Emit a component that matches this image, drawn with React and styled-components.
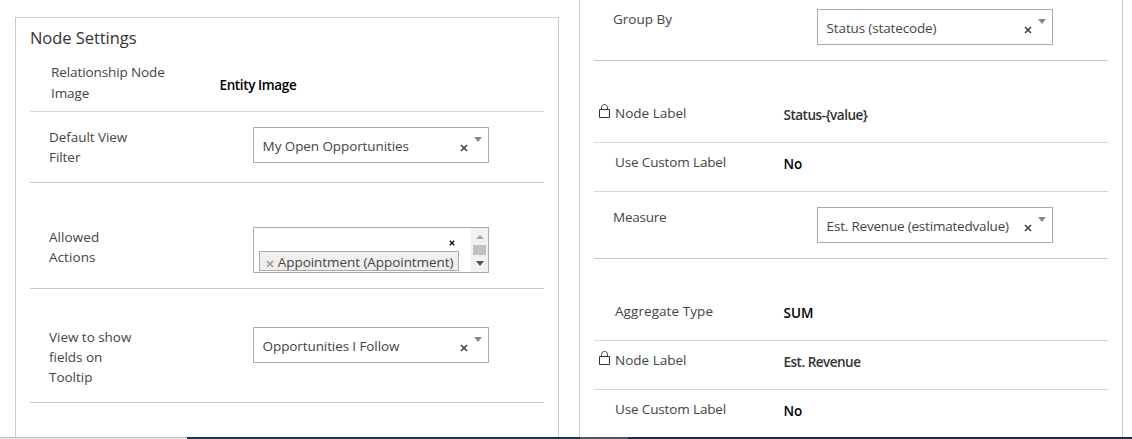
import React from "react";
import styled, { createGlobalStyle } from "styled-components";

const GlobalStyle = createGlobalStyle`
  * { box-sizing: border-box; }
  body {
    margin: 0;
    background: #fff;
    color: #444;
    font: 13.5px/20px "Open Sans", "Noto Sans", sans-serif;
    overflow: hidden;
  }
`;

const Page = styled.div`
  display: flex;
  flex-direction: column;
  height: 439px;
`;

const Columns = styled.main`
  display: flex;
  flex: 1;
  min-height: 0;
  padding-left: 15px;
  gap: 20px;
  overflow: hidden;
`;

const Panel = styled.section`
  width: 544px;
  flex: none;
  padding: 0 14px;
  border: solid #ccc;
  border-width: ${(p) => (p.$continued ? "0 1px" : "1px 1px 0")};
  margin-top: ${(p) => (p.$continued ? 0 : 17)}px;
`;

const Title = styled.h2`
  margin: 0;
  padding-top: 8px;
  font-size: 16.5px;
  font-weight: 400;
  line-height: 24px;
  letter-spacing: -0.05px;
  color: #333;
`;

const Row = styled.div`
  display: flex;
  align-items: flex-start;
  height: ${(p) => p.$height}px;
  padding-top: ${(p) => p.$top}px;
  border-bottom: ${(p) => (p.$last ? 0 : 1)}px solid ${(p) => (p.$light ? "#d6d6d6" : "#c8c8c8")};
`;

const Label = styled.div`
  display: flex;
  flex: none;
  width: ${(p) => p.$width}px;
  padding-left: ${(p) => p.$indent}px;
  line-height: ${(p) => p.$line || 20}px;
  letter-spacing: ${(p) => p.$track || 0}px;
  white-space: pre-line;
`;

const Value = styled.div`
  padding: ${(p) => p.$drop}px 0 0 0.5px;
  font-weight: 600;
  letter-spacing: ${(p) => p.$track || 0}px;
  color: ${(p) => (p.$muted ? "#333" : "#000")};
`;

const SelectBox = styled.div`
  display: flex;
  width: 236px;
  height: 36px;
  padding: 8px 6px 0 8.6px;
  border: 1px solid #aaa;
  letter-spacing: ${(p) => p.$track || 0}px;
`;

const SelectText = styled.span`
  flex: 1;
  white-space: nowrap;
`;

const Cross = styled.svg`
  display: block;
  flex: none;
  width: ${(p) => p.$size}px;
  height: ${(p) => p.$size}px;
  margin: ${(p) => p.$margin};
  fill: none;
  stroke: ${(p) => p.$color};
  stroke-width: ${(p) => p.$weight || 1.6};
`;

const Arrow = styled.i`
  flex: none;
  width: 0;
  height: 0;
  margin: ${(p) => p.$margin || 0};
  border: solid transparent;
  border-width: ${(p) => (p.$up ? "0 4px 4px" : "5px 4px 0")};
  border-top-color: ${(p) => (p.$up ? "transparent" : p.$color)};
  border-bottom-color: ${(p) => (p.$up ? p.$color : "transparent")};
`;

const MultiBox = styled.div`
  display: flex;
  width: 236px;
  height: 46px;
  border: 1px solid #aaa;
`;

const MultiContent = styled.div`
  display: flex;
  flex: 1;
  flex-direction: column;
  padding: 12px 0 0 5px;
`;

const Chip = styled.div`
  display: flex;
  width: 200px;
  height: 20px;
  padding-left: 7px;
  background: #efefef;
  border: 1px solid #aaa;
  line-height: 20px;
  letter-spacing: -0.06px;
  white-space: nowrap;
`;

const Scrollbar = styled.div`
  display: flex;
  flex-direction: column;
  align-items: center;
  width: 17px;
  padding-top: 7px;
  background: #f1f1f1;
`;

const Thumb = styled.div`
  width: 13px;
  height: 10px;
  margin: 6px 0 6px;
  background: #c1c1c1;
`;

const LockSvg = styled.svg`
  flex: none;
  width: 12px;
  height: 15px;
  margin: 1px 4px 0 -16px;
  fill: none;
  stroke: #333;
  stroke-width: 1;
`;

const Taskbar = styled.footer`
  display: flex;
  flex: none;
  height: 2px;
  background: #202b3d;
`;

const TaskSegment = styled.div`
  width: ${(p) => p.$width}px;
  background: ${(p) => p.$color};
  border-top: 1px solid ${(p) => p.$edge || p.$color};
`;

const X = (props) => (
  <Cross viewBox="0 0 8 8" {...props}>
    <path d="M1 1 L7 7 M7 1 L1 7" />
  </Cross>
);

const Lock = () => (
  <LockSvg viewBox="0 0 12 15" aria-hidden="true">
    <path d="M0.5 5.5 H10.5 V13.5 H0.5 Z M2.5 5.5 V3.5 C2.5 -0.5 8.5 -0.5 8.5 3.5 V5.5" />
  </LockSvg>
);

const Select = ({ children, track }) => (
  <SelectBox $track={track}>
    <SelectText>{children}</SelectText>
    <X $size={8} $margin="7.5px 6.5px 0 0" $color="#444" $weight={1.7} />
    <Arrow $color="#888" $margin="1px 0 0" />
  </SelectBox>
);

const LockableLabel = ({ locked, children, ...rest }) => (
  <Label $width={189} $indent={21} {...rest}>
    {locked && <Lock />}
    {children}
  </Label>
);

export default function App() {
  return (
    <>
      <GlobalStyle />
      <Page>
        <Columns>
          <Panel>
            <Title>Node Settings</Title>
            <Row $height={62} $top={12} $light>
              <Label $width={189} $indent={21} $line={21} $track={-0.1}>{"Relationship Node\nImage"}</Label>
              <Value $drop={13} $track={-0.38}>Entity Image</Value>
            </Row>
            <Row $height={71} $top={15}>
              <Label $width={223} $indent={19} $track={-0.06}>{"Default View\nFilter"}</Label>
              <Select track={-0.09}>My Open Opportunities</Select>
            </Row>
            <Row $height={106} $top={44}>
              <Label $width={223} $indent={19} $track={0.06}>{"Allowed\nActions"}</Label>
              <MultiBox>
                <MultiContent>
                  <X $size={6} $margin="0 0 5px 190px" $color="#1b1b3a" $weight={2} />
                  <Chip>
                    <X $size={8} $margin="8px 3.4px 0 -0.6px" $color="#999" />
                    Appointment (Appointment)
                  </Chip>
                </MultiContent>
                <Scrollbar>
                  <Arrow $up $color="#a3a3a3" />
                  <Thumb />
                  <Arrow $color="#505050" />
                </Scrollbar>
              </MultiBox>
            </Row>
            <Row $height={114} $top={38}>
              <Label $width={223} $indent={19} $track={-0.03}>{"View to show\nfields on\nTooltip"}</Label>
              <Select track={-0.1}>Opportunities I Follow</Select>
            </Row>
          </Panel>

          <Panel $continued>
            <Row $height={61} $top={9}>
              <Label $width={223} $indent={19}>Group By</Label>
              <Select track={-0.14}>Status (statecode)</Select>
            </Row>
            <Row $height={82} $top={42} $light>
              <LockableLabel locked>Node Label</LockableLabel>
              <Value $drop={2} $track={-0.5} $muted>{"Status-{value}"}</Value>
            </Row>
            <Row $height={49} $top={9} $light>
              <LockableLabel $track={-0.14}>Use Custom Label</LockableLabel>
              <Value $drop={2}>No</Value>
            </Row>
            <Row $height={67} $top={15}>
              <Label $width={223} $indent={19} $track={-0.25}>Measure</Label>
              <Select track={-0.2}>Est. Revenue (estimatedvalue)</Select>
            </Row>
            <Row $height={82} $top={42} $light>
              <LockableLabel $track={0.07}>Aggregate Type</LockableLabel>
              <Value $drop={2}>SUM</Value>
            </Row>
            <Row $height={49} $top={9} $light>
              <LockableLabel locked>Node Label</LockableLabel>
              <Value $drop={2} $track={-0.5} $muted>Est. Revenue</Value>
            </Row>
            <Row $height={47} $top={9} $last>
              <LockableLabel $track={-0.14}>Use Custom Label</LockableLabel>
              <Value $drop={2}>No</Value>
            </Row>
          </Panel>
        </Columns>
        <Taskbar>
          <TaskSegment $width={187} $color="#f0f0f0" $edge="#b9b9b9" />
          <TaskSegment $width={393} $color="#203340" />
          <TaskSegment $width={48} $color="#4d5662" />
        </Taskbar>
      </Page>
    </>
  );
}
